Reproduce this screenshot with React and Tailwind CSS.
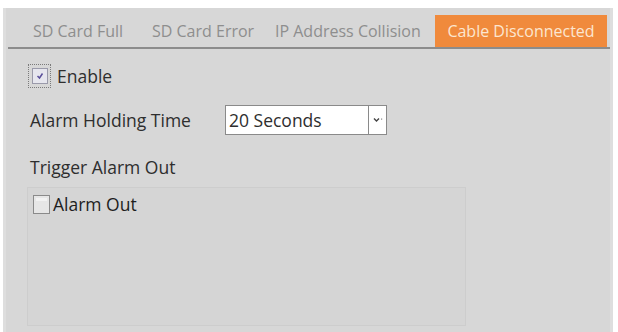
export default function App() {
  const tabs = [
    { label: 'SD Card Full', w: 'w-[119px]' },
    { label: 'SD Card Error', w: 'w-[123px]' },
    { label: 'IP Address Collision', w: 'w-[160px]' },
  ];

  return (
    <div
      className="w-[618px] h-[332px] bg-white pt-[8px] pl-[3px] overflow-hidden"
      style={{ fontFamily: '"Open Sans", "Liberation Sans", sans-serif' }}
    >
      <div className="w-[610px] h-[324px] bg-[#d7d7d7] border-l-[3px] border-r-[3px] border-[#dedede]">
        {/* Tabs */}
        <div className="flex items-end h-[41px] ml-[2px] border-b-2 border-[#8c8c8c] pl-[25px]">
          {tabs.map((t) => (
            <div key={t.label} className={`h-[32px] flex items-center ${t.w} text-[16px] text-[#8e8e8e] whitespace-nowrap`}>
              {t.label}
            </div>
          ))}
          <div className="h-[32px] w-[172px] flex items-center justify-center bg-[#f08a3c] text-[16px] text-[#fce6d0] whitespace-nowrap">
            Cable Disconnected
          </div>
        </div>

        {/* Enable */}
        <div className="flex items-center h-[24px] mt-[15px] ml-[22px]">
          <div className="w-[23px] h-[24px] border border-dotted border-[#7a7a7a] flex items-center justify-center">
            <div className="w-[16px] h-[16px] bg-[#e6e6ee] border border-[#9a9aaa] flex items-center justify-center">
              <svg width="10" height="10" viewBox="0 0 10 10">
                <path d="M2.5 5 L4.5 7 L7.5 2.5" fill="none" stroke="#5a4f9a" strokeWidth="1.5" />
              </svg>
            </div>
          </div>
          <span className="ml-[6px] text-[17.5px] leading-[24px] text-[#2e2e2e]">Enable</span>
        </div>

        {/* Alarm Holding Time */}
        <div className="flex items-center mt-[17px] ml-[24px]">
          <span className="w-[195px] text-[17.5px] text-[#2e2e2e] whitespace-nowrap">Alarm Holding Time</span>
          <div className="flex h-[30px] w-[162px] bg-white border border-[#8a8a8a]">
            <span className="flex-1 flex items-center pl-[3px] text-[17.5px] text-[#2e2e2e]">20 Seconds</span>
            <div className="w-[18px] border-l border-[#8a8a8a] flex items-center justify-center">
              <svg width="10" height="6" viewBox="0 0 10 6">
                <path d="M1 1.5 L3.5 4 L6 1.5" fill="none" stroke="#444" strokeWidth="1.4" />
                <rect x="8" y="1.5" width="1.2" height="1.2" fill="#888" />
              </svg>
            </div>
          </div>
        </div>

        {/* Trigger Alarm Out */}
        <div className="mt-[20px] ml-[24px] h-[24px] leading-[24px] text-[17.5px] text-[#2e2e2e]">
          Trigger Alarm Out
        </div>

        {/* Alarm out box */}
        <div className="mt-[8px] ml-[21px] w-[439px] h-[139px] border border-[#cdcdcd] bg-[#d5d5d5] pt-[5px] pl-[5px]">
          <div className="flex items-center">
            <div className="w-[17px] h-[19px] border border-[#8a8a8a] bg-[#e6e6e6] p-[2px]">
              <div className="h-[3px] bg-[#f2f2f2]" />
            </div>
            <span className="ml-[3px] text-[17.5px] leading-[22px] text-[#1e1e1e]">Alarm Out</span>
          </div>
        </div>
      </div>
    </div>
  );
}
